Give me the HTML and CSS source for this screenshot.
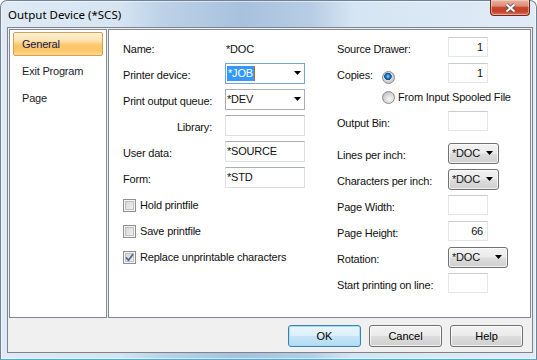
FILE: index.html
```html
<!DOCTYPE html>
<html>

<head>
    <meta charset="UTF-8">
    <title>Output Device (*SCS)</title>
    <link rel="stylesheet" href="styles.css">
</head>

<body>
    <div class="window">
        <div class="titlebar">
            <span class="title">Output Device (*SCS)</span>
            <span class="close" aria-label="Close">
                <svg width="13" height="10" viewBox="0 0 13 10">
                    <path d="M2.5 1.5 L10.5 8.5 M10.5 1.5 L2.5 8.5" stroke="#5b5f66" stroke-width="3.6" />
                    <path d="M2.5 1.5 L10.5 8.5 M10.5 1.5 L2.5 8.5" stroke="#fafafa" stroke-width="1.8" />
                </svg>
            </span>
        </div>

        <div class="client">
            <div class="panes">
                <ul class="nav">
                    <li class="active">General</li>
                    <li>Exit Program</li>
                    <li>Page</li>
                </ul>

                <div class="content">
                    <div class="col col-left">
                        <div class="row">
                            <span class="label">Name:</span>
                            <span class="label plain">*DOC</span>
                        </div>
                        <div class="row">
                            <span class="label">Printer device:</span>
                            <div class="combo focus">
                                <span class="sel">*JOB</span><span class="caret"></span>
                                <svg class="arrow" width="7" height="4" viewBox="0 0 7 4"><path d="M0 0 H7 L3.5 4 Z" fill="#000" /></svg>
                            </div>
                        </div>
                        <div class="row">
                            <span class="label">Print output queue:</span>
                            <div class="combo">
                                <span>*DEV</span>
                                <svg class="arrow" width="7" height="4" viewBox="0 0 7 4"><path d="M0 0 H7 L3.5 4 Z" fill="#000" /></svg>
                            </div>
                        </div>
                        <div class="row">
                            <span class="label right">Library:</span>
                            <div class="field"></div>
                        </div>
                        <div class="row">
                            <span class="label">User data:</span>
                            <div class="field">*SOURCE</div>
                        </div>
                        <div class="row">
                            <span class="label">Form:</span>
                            <div class="field">*STD</div>
                        </div>

                        <div class="check first">
                            <span class="box"></span>Hold printfile
                        </div>
                        <div class="check">
                            <span class="box"></span>Save printfile
                        </div>
                        <div class="check">
                            <span class="box">
                                <svg width="9" height="9" viewBox="0 0 9 9"><path d="M1 4.5 L3.5 7.2 L8 1.2" fill="none" stroke="#4b6397" stroke-width="1.7" /></svg>
                            </span>Replace unprintable characters
                        </div>
                    </div>

                    <div class="col col-right">
                        <div class="row">
                            <span class="label">Source Drawer:</span>
                            <div class="field small">1</div>
                        </div>
                        <div class="row">
                            <span class="label copies">
                                <span class="copies-text">Copies:</span>
                                <span class="radio on"></span>
                            </span>
                            <div class="field small">1</div>
                        </div>
                        <div class="radio-row">
                            <span class="radio"></span>From Input Spooled File
                        </div>
                        <div class="row">
                            <span class="label">Output Bin:</span>
                            <div class="field small"></div>
                        </div>
                        <div class="row gap">
                            <span class="label">Lines per inch:</span>
                            <div class="dd">*DOC
                                <svg class="arrow" width="7" height="4" viewBox="0 0 7 4"><path d="M0 0 H7 L3.5 4 Z" fill="#000" /></svg>
                            </div>
                        </div>
                        <div class="row">
                            <span class="label">Characters per inch:</span>
                            <div class="dd">*DOC
                                <svg class="arrow" width="7" height="4" viewBox="0 0 7 4"><path d="M0 0 H7 L3.5 4 Z" fill="#000" /></svg>
                            </div>
                        </div>
                        <div class="row">
                            <span class="label">Page Width:</span>
                            <div class="field small"></div>
                        </div>
                        <div class="row">
                            <span class="label">Page Height:</span>
                            <div class="field small">66</div>
                        </div>
                        <div class="row">
                            <span class="label">Rotation:</span>
                            <div class="dd wide">*DOC
                                <svg class="arrow" width="7" height="4" viewBox="0 0 7 4"><path d="M0 0 H7 L3.5 4 Z" fill="#000" /></svg>
                            </div>
                        </div>
                        <div class="row">
                            <span class="label">Start printing on line:</span>
                            <div class="field small"></div>
                        </div>
                    </div>
                </div>
            </div>

            <div class="footer">
                <button class="btn default">OK</button>
                <button class="btn">Cancel</button>
                <button class="btn">Help</button>
            </div>
        </div>
    </div>
</body>

</html>
```

FILE: styles.css
```css
* {
    box-sizing: border-box;
}

body {
    margin: 0;
    background: #fff;
    font-family: "Liberation Sans", Arial, sans-serif;
    font-size: 11px;
    letter-spacing: -0.2px;
    color: #111;
}

.window {
    width: 537px;
    height: 360px;
    display: flex;
    flex-direction: column;
    padding: 0 3px 6px 6px;
    border: 1px solid #6f8297;
    border-bottom-color: #3fb3e4;
    border-radius: 7px 7px 0 0;
    background: linear-gradient(to right, #dfeaf6 0%, #d6e4f2 22%, #bdd2e8 30%, #a8c1dc 45%, #b7cde5 58%, #d6e5f3 66%, #e0ebf6 100%);
    box-shadow: inset 0 0 0 1px rgba(255, 255, 255, 0.55);
}

.titlebar {
    height: 26px;
    display: flex;
    align-items: center;
    justify-content: space-between;
    padding-left: 1px;
}

.title {
    font-family: "Noto Sans", sans-serif;
    font-size: 11.5px;
    letter-spacing: 0;
    color: #000;
}

.close {
    align-self: flex-start;
    margin-top: -1px;
    margin-right: 3px;
    width: 40px;
    height: 16px;
    display: flex;
    align-items: center;
    justify-content: center;
    border: 1px solid #6b2a20;
    border-top: none;
    border-radius: 0 0 4px 4px;
    background: linear-gradient(#eab3a4 0%, #dd8c76 40%, #c8482d 50%, #c24127 75%, #d8775b 100%);
    box-shadow: inset 0 0 0 1px rgba(255, 220, 210, 0.5);
}

.client {
    height: 326px;
    border: 1px solid #7c838c;
    background: #f0f0f0;
    padding: 1px;
    display: flex;
    flex-direction: column;
}

.panes {
    height: 289px;
    display: flex;
    gap: 1px;
}

.nav {
    width: 98px;
    margin: 0;
    padding: 2px 3px;
    list-style: none;
    background: #fff;
    border: 1px solid #828790;
}

.nav li {
    height: 24px;
    line-height: 22px;
    margin-bottom: 3px;
    padding-left: 8px;
    border: 1px solid transparent;
    border-radius: 2px;
    color: #1c1c2c;
}

.nav li.active {
    color: #14145a;
    border-color: #d8a04a;
    background: linear-gradient(#fff3dc 0%, #fde2ad 35%, #fbc869 55%, #fbc66a 80%, #fdd996 100%);
}

.content {
    width: 423px;
    display: flex;
    padding-top: 4px;
    background: #fff;
    border: 1px solid #828790;
}

.col-left {
    width: 228px;
    padding-left: 14px;
}

.row {
    height: 26px;
    display: grid;
    align-items: center;
}

.col-left .row {
    grid-template-columns: 102px 80px;
}

.col-right .row {
    grid-template-columns: 111px auto;
}

.label {
    padding-top: 4px;
    white-space: nowrap;
}

.label.plain {
    padding-left: 1px;
}

.label.right {
    text-align: right;
    padding-right: 13px;
}

.field,
.combo {
    height: 21px;
    line-height: 19px;
    padding-left: 1px;
    border: 1px solid #dbdfe6;
    border-top-color: #abadb3;
    border-left-color: #e2e3ea;
    background: #fff;
    white-space: nowrap;
}

.field.small {
    width: 40px;
    height: 20px;
    line-height: 18px;
    text-align: right;
    padding-right: 4px;
    border-color: #e3e6ea;
    border-top-color: #c9ccd1;
}

.combo {
    display: flex;
    align-items: center;
    padding-right: 3px;
    border-color: #abadb3;
}

.combo.focus {
    border-color: #76a6d8;
}

.combo .arrow,
.dd .arrow {
    margin-left: auto;
}

.sel {
    background: #3399ff;
    color: #fff;
    line-height: 15px;
    padding: 0 1px;
}

.caret {
    width: 1px;
    height: 15px;
    background: #c26a1c;
}

.check {
    height: 26px;
    display: flex;
    align-items: center;
    gap: 4px;
}

.check.first {
    margin-top: 2px;
}

.box {
    width: 13px;
    height: 13px;
    display: flex;
    align-items: center;
    justify-content: center;
    border: 1px solid #8e8f8f;
    background: linear-gradient(135deg, #cfcfcf, #f7f7f7);
    box-shadow: inset 0 0 0 1px #f4f4f4, inset 0 0 0 2px #c0c0c0;
}

.col-right {
    width: 180px;
    padding-left: 0;
}

.copies {
    display: flex;
    align-items: center;
}

.copies-text {
    width: 45px;
}

.copies .radio {
    margin-top: 4px;
}

.radio {
    width: 13px;
    height: 13px;
    border-radius: 50%;
    border: 1px solid #8b8b8b;
    background: radial-gradient(circle at 60% 65%, #f6f6f6 0, #dcdcdc 45%, #c2c2c2 75%, #e4e4e4 100%);
}

.radio.on {
    background: radial-gradient(circle at 45% 40%, #bfe6ff 0, #2d88d8 1.5px, #0e4f95 3.5px, #dedede 4px, #c4c4c4 75%, #e8e8e8 100%);
}

.radio-row {
    height: 22px;
    display: flex;
    align-items: center;
    gap: 3px;
    padding-left: 45px;
    white-space: nowrap;
}

.row.gap {
    margin-top: 6px;
}

.dd {
    width: 51px;
    height: 21px;
    display: flex;
    align-items: center;
    padding: 0 5px 0 3px;
    border: 1px solid #707070;
    border-radius: 3px;
    background: linear-gradient(#f2f2f2 0%, #ebebeb 48%, #dddddd 52%, #cfcfcf 100%);
    box-shadow: inset 0 0 0 1px rgba(255, 255, 255, 0.7);
}

.dd.wide {
    width: 60px;
}

.footer {
    display: flex;
    justify-content: flex-end;
    gap: 8px;
    padding: 7px 8px 0 0;
}

.btn {
    width: 73px;
    height: 22px;
    padding: 0;
    font-family: "Liberation Sans", Arial, sans-serif;
    font-size: 11px;
    color: #000;
    border: 1px solid #707070;
    border-radius: 3px;
    background: linear-gradient(#f2f2f2 0%, #ebebeb 48%, #dddddd 52%, #cfcfcf 100%);
    box-shadow: inset 0 0 0 1px rgba(255, 255, 255, 0.75);
}

.btn.default {
    border-color: #3c7fb1;
    background: linear-gradient(#e9f5fc 0%, #dcf0fb 48%, #c6e5f7 52%, #b4dbf3 100%);
    box-shadow: inset 0 0 0 1px #a6e0f8;
}
```
